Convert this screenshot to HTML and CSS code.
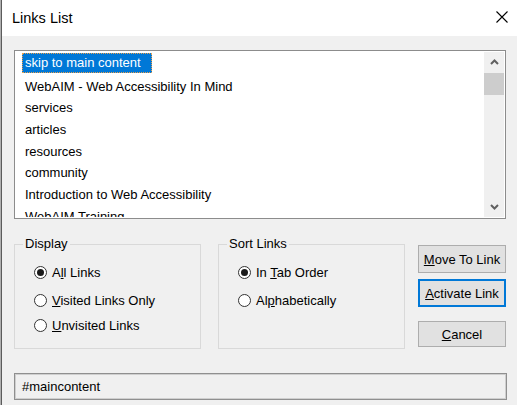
FILE: index.html
```html
<!DOCTYPE html>
<html lang="en">
<head>
<meta charset="utf-8">
<title>Links List</title>
<link rel="stylesheet" href="styles.css">
</head>
<body>
<div class="frame">
  <div class="window">
    <div class="titlebar">
      <span class="title">Links List</span>
      <svg class="close" width="12" height="12" viewBox="0 0 12 12" aria-label="Close">
        <path d="M0.5 0.5 L11.5 11.5 M11.5 0.5 L0.5 11.5" stroke="#000" stroke-width="1.1" fill="none"/>
      </svg>
    </div>
    <div class="content">
      <div class="listbox">
        <ul class="items">
          <li class="item"><span class="selected">skip to main content</span></li>
          <li class="item">WebAIM - Web Accessibility In Mind</li>
          <li class="item">services</li>
          <li class="item">articles</li>
          <li class="item">resources</li>
          <li class="item">community</li>
          <li class="item">Introduction to Web Accessibility</li>
          <li class="item">WebAIM Training</li>
        </ul>
        <div class="scrollbar">
          <div class="sb-btn">
            <svg width="9" height="6" viewBox="0 0 9 6"><path d="M1 5 L4.5 1.5 L8 5" stroke="#606060" stroke-width="2" fill="none"/></svg>
          </div>
          <div class="sb-track"><div class="sb-thumb"></div></div>
          <div class="sb-btn">
            <svg width="9" height="6" viewBox="0 0 9 6"><path d="M1 1 L4.5 4.5 L8 1" stroke="#606060" stroke-width="2" fill="none"/></svg>
          </div>
        </div>
      </div>

      <div class="controls">
        <fieldset class="group">
          <legend>Display</legend>
          <div class="radio-row"><span class="radio checked"></span><span>A<u>l</u>l Links</span></div>
          <div class="radio-row"><span class="radio"></span><span><u>V</u>isited Links Only</span></div>
          <div class="radio-row"><span class="radio"></span><span><u>U</u>nvisited Links</span></div>
        </fieldset>
        <fieldset class="group">
          <legend>Sort Links</legend>
          <div class="radio-row"><span class="radio checked"></span><span>In <u>T</u>ab Order</span></div>
          <div class="radio-row"><span class="radio"></span><span>Al<u>p</u>habetically</span></div>
        </fieldset>
        <div class="buttons">
          <div class="btn"><u>M</u>ove To Link</div>
          <div class="btn default"><u>A</u>ctivate Link</div>
          <div class="btn cancel"><u>C</u>ancel</div>
        </div>
      </div>

      <div class="urlfield">#maincontent</div>
    </div>
  </div>
</div>
</body>
</html>
```
FILE: styles.css
```css
* { box-sizing: border-box; }

html, body {
  margin: 0;
  padding: 0;
  width: 517px;
  height: 405px;
  overflow: hidden;
  background: #f0f0f0;
}

body {
  font-family: "Liberation Sans", Arial, sans-serif;
  font-size: 13px;
  color: #000;
}

.frame {
  height: 405px;
  border-left: 1px solid #b0b0b0;
}

.window {
  height: 405px;
  border-left: 1px solid #5c5c5c;
  background: #f0f0f0;
}

.titlebar {
  height: 36px;
  background: #fff;
  display: flex;
  align-items: center;
  justify-content: space-between;
  padding: 0 9px 0 10px;
}

.title {
  font-size: 14.5px;
  color: #000;
}

.close {
  display: block;
  margin-top: -2px;
}

.content {
  padding: 14px 10px 0 12px;
}

.listbox {
  height: 169px;
  margin-right: 1px;
  border: 1px solid #8c8c8c;
  padding: 1px;
  background: #fff;
  display: flex;
}

.items {
  list-style: none;
  margin: 0;
  padding: 0 0 0 6px;
  flex: 1;
  overflow: hidden;
}

.item {
  height: 21.7px;
  line-height: 25.5px;
  white-space: nowrap;
  padding-left: 3px;
}

.item:first-child {
  padding-left: 0;
  line-height: 21.7px;
}

.selected {
  display: inline-block;
  height: 20px;
  line-height: 18px;
  vertical-align: top;
  margin-top: 1px;
  padding: 0 10px 0 2px;
  background: #0078d7;
  color: #fff;
  border: 1px dotted #e9a04c;
}

.scrollbar {
  width: 20px;
  background: #f0f0f0;
  display: flex;
  flex-direction: column;
}

.sb-btn {
  height: 20px;
  display: flex;
  align-items: center;
  justify-content: center;
}

.sb-btn svg { display: block; }

.sb-track {
  flex: 1;
  padding-top: 1px;
}

.sb-thumb {
  height: 22px;
  background: #cdcdcd;
}

.controls {
  display: flex;
  margin-top: 17px;
  height: 113px;
}

.group {
  margin: 0 17px 0 0;
  width: 187px;
  height: 113px;
  border: 1px solid #d9d9d9;
  padding: 10px 0 0 19px;
  min-width: 0;
}

.group legend {
  padding: 0 2px;
  margin-left: -11px;
  line-height: 16px;
}

.radio-row {
  display: flex;
  align-items: center;
  gap: 5px;
  height: 20px;
  margin-bottom: 8px;
  white-space: nowrap;
}

.radio-row:nth-of-type(2) {
  margin-bottom: 5px;
}

.radio {
  width: 13px;
  height: 13px;
  border-radius: 50%;
  border: 1px solid #333;
  background: #fff;
  display: flex;
  align-items: center;
  justify-content: center;
  flex: none;
}

.radio.checked::after {
  content: "";
  width: 7px;
  height: 7px;
  border-radius: 50%;
  background: #1a1a1a;
}

.buttons {
  display: flex;
  flex-direction: column;
  width: 88px;
  margin-left: -4px;
  padding-top: 9px;
}

.btn {
  flex: none;
  height: 28px;
  background: #e1e1e1;
  border: 1px solid #adadad;
  display: flex;
  align-items: center;
  justify-content: center;
  margin-bottom: 6px;
}

.btn.default {
  height: 28px;
  border: 2px solid #0078d7;
  margin-bottom: 14px;
}

.btn.cancel {
  height: 26px;
  margin-bottom: 0;
}

.urlfield {
  margin-top: 24px;
  height: 27px;
  border: 1px solid #8f8f8f;
  box-shadow: inset 0 0 0 1px #cfcfcf;
  padding-left: 7px;
  display: flex;
  align-items: center;
}
```
